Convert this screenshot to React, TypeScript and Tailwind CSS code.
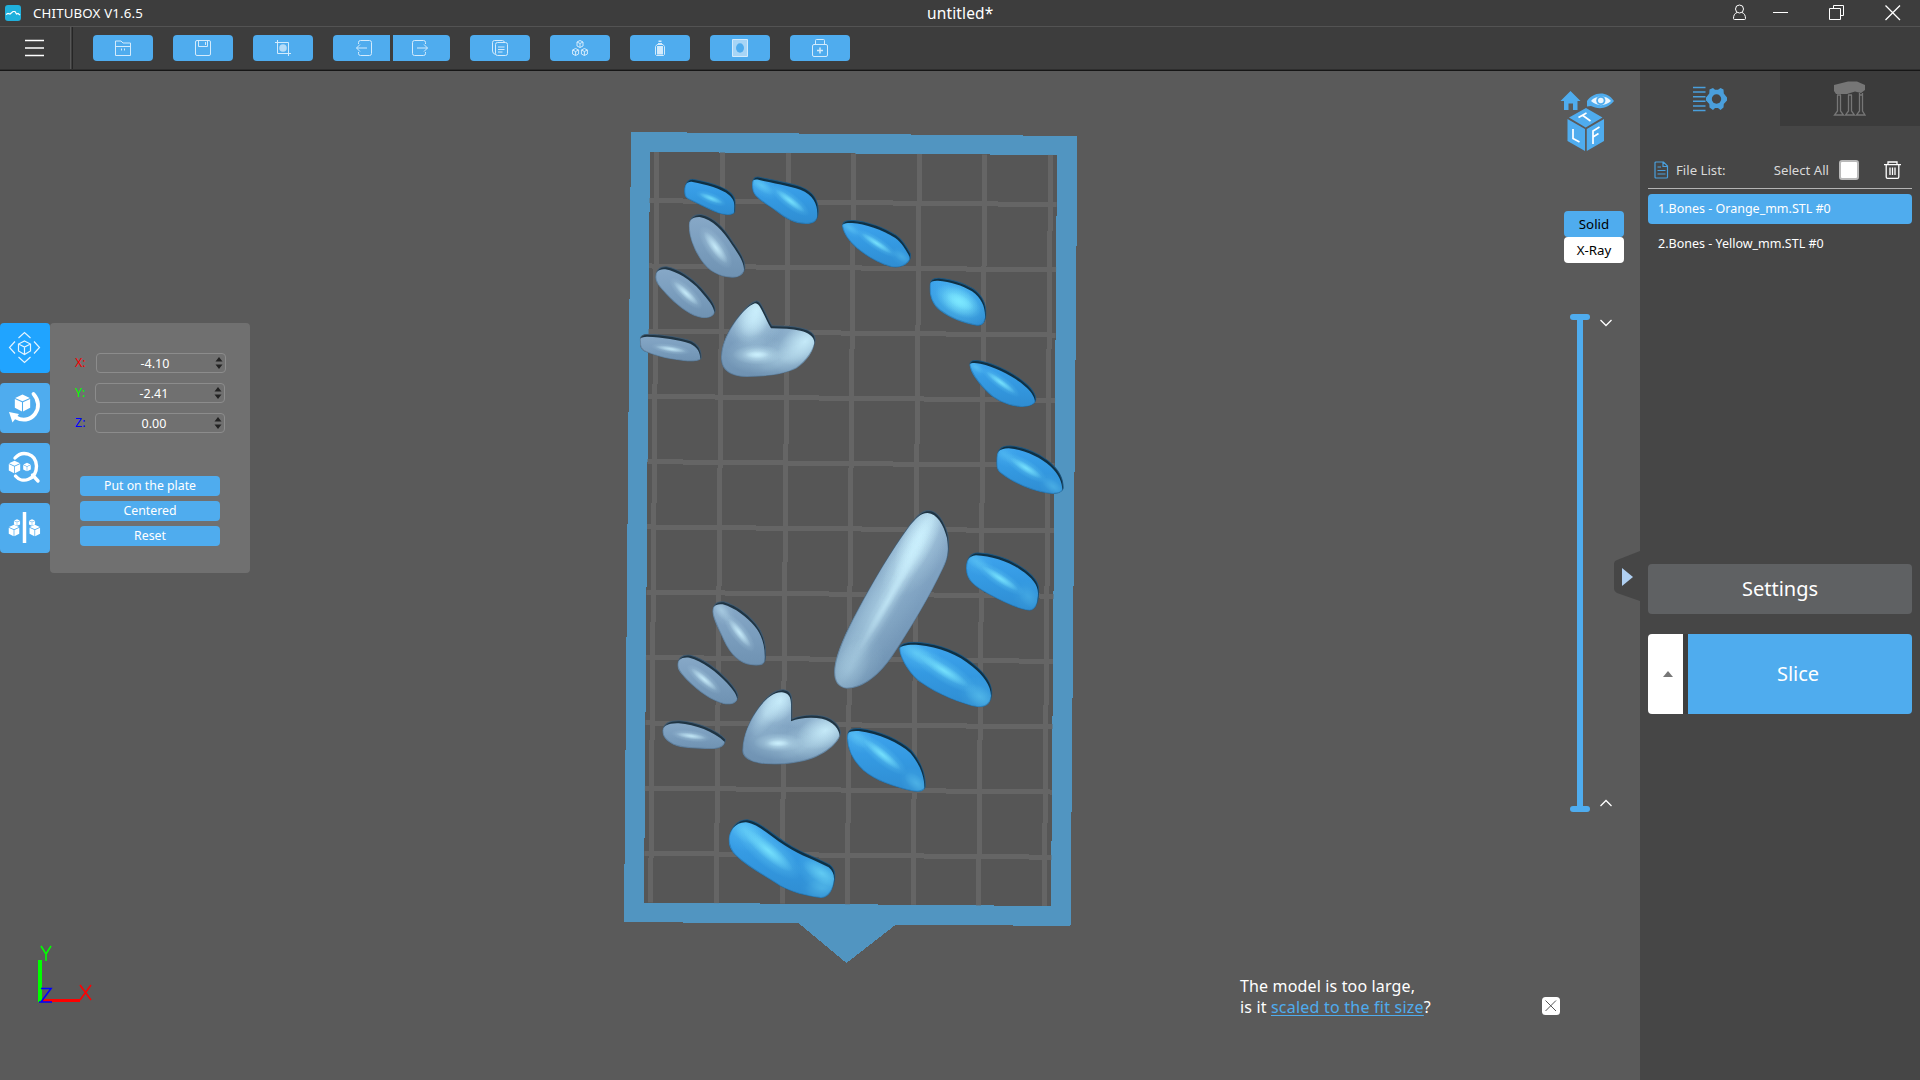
import React, { useId } from "react";
import type { ReactNode } from "react";

type Tone = "blue" | "steel";

interface Highlight {
  x: number;
  y: number;
  rx: number;
  ry: number;
  angle: number;
  strength?: number;
}

interface BoneShape {
  tone: Tone;
  d: string;
  glow: Highlight[];
}

const TONES = {
  blue: { rim: "#0f3044", top: "#3ea4ee", mid: "#3499e1", low: "#2f8dd2", edge: "#2a6fa3", hi: "#7ce8ff" },
  steel: { rim: "#1f3443", top: "#88a9c8", mid: "#7b9ebe", low: "#6f92b2", edge: "#54728d", hi: "#cdf2ff" },
};

const upperBones: BoneShape[] = [
  { tone: "blue", d: "M193 205C197 185 206 174 222 177C262 184 310 198 330 215C343 226 347 235 347 248L346 275C340 287 318 288 295 280C265 268 225 248 203 237C192 231 192 220 193 205Z", glow: [{ x: 273, y: 235, rx: 38, ry: 9, angle: 22, strength: 0.9 }] },
  { tone: "blue", d: "M396 195C397 175 402 166 422 171C460 180 510 187 545 200C585 216 597 245 596 275C595 300 585 312 558 312C525 312 500 298 470 275C445 256 425 247 406 227C398 218 396 208 396 195Z", glow: [{ x: 510, y: 242, rx: 55, ry: 12, angle: 37 }, { x: 425, y: 197, rx: 45, ry: 16, angle: 35, strength: 0.55 }] },
  { tone: "blue", d: "M666 318C666 303 678 299 700 300C740 303 790 320 830 345C848 358 860 378 872 400C876 412 871 422 858 433C845 443 825 444 810 440C775 430 740 410 710 385C688 366 670 342 666 318Z", glow: [{ x: 770, y: 370, rx: 55, ry: 10, angle: 33 }, { x: 690, y: 324, rx: 35, ry: 12, angle: 35, strength: 0.4 }, { x: 845, y: 410, rx: 30, ry: 14, angle: 35, strength: 0.3 }] },
  { tone: "blue", d: "M929 500C929 480 936 472 958 473C995 477 1030 486 1060 505C1090 526 1101 555 1099 585C1098 605 1088 620 1070 617C1030 610 990 595 960 572C938 555 927 530 929 500Z", glow: [{ x: 1015, y: 544, rx: 75, ry: 40, angle: 30 }, { x: 1020, y: 544, rx: 45, ry: 20, angle: 28 }] },
  { tone: "blue", d: "M1048 735C1048 720 1060 717 1085 722C1135 733 1190 762 1225 795C1240 810 1250 825 1249 840C1243 858 1220 863 1195 860C1155 856 1120 837 1095 810C1070 783 1052 760 1048 735Z", glow: [{ x: 1142, y: 787, rx: 54, ry: 10, angle: 36 }, { x: 1068, y: 742, rx: 28, ry: 12, angle: 35, strength: 0.4 }] },
  { tone: "steel", d: "M206 318C206 295 220 281 243 282C280 288 315 325 340 365C358 392 378 418 376 445C372 465 355 475 335 473C300 472 265 455 242 420C222 390 206 350 206 318Z", glow: [{ x: 287, y: 382, rx: 58, ry: 16, angle: 54, strength: 1 }] },
  { tone: "steel", d: "M106 470C107 448 120 437 140 439C175 445 215 470 245 503C268 530 289 553 287 573C282 590 265 597 245 594C215 590 180 565 150 535C125 508 104 490 106 470Z", glow: [{ x: 198, y: 520, rx: 50, ry: 12, angle: 43, strength: 1 }] },
  { tone: "steel", d: "M60 665C58 648 65 642 85 641C130 643 180 650 215 662C238 673 246 690 245 715C238 726 215 726 190 723C150 719 110 710 80 697C62 690 59 680 60 665Z", glow: [{ x: 152, y: 687, rx: 46, ry: 8, angle: 9, strength: 0.95 }] },
  { tone: "steel", d: "M303 710C304 670 325 630 350 595C370 568 392 546 409 541C420 541 424 552 432 567C441 584 448 602 457 616C490 616 520 618 545 623C570 629 588 642 587 660C584 690 560 725 530 745C500 762 440 771 380 771C330 770 301 750 303 710Z", glow: [{ x: 408, y: 572, rx: 85, ry: 50, angle: -70, strength: 1 }, { x: 400, y: 600, rx: 75, ry: 50, angle: -60, strength: 0.7 }, { x: 555, y: 665, rx: 95, ry: 55, angle: -35, strength: 1 }, { x: 500, y: 715, rx: 90, ry: 35, angle: -20, strength: 0.4 }, { x: 412, y: 704, rx: 75, ry: 30, angle: 0, strength: 0.8 }, { x: 412, y: 704, rx: 36, ry: 11, angle: 0 }] },
];

const middleBones: BoneShape[] = [
  { tone: "blue", d: "M1129 185C1129 150 1140 136 1170 136C1215 139 1265 162 1295 190C1322 215 1332 240 1331 265C1326 282 1305 284 1280 280C1235 272 1180 250 1145 222C1130 212 1129 200 1129 185Z", glow: [{ x: 1218, y: 204, rx: 56, ry: 13, angle: 32 }, { x: 1300, y: 260, rx: 40, ry: 18, angle: 35, strength: 0.35 }, { x: 1155, y: 165, rx: 40, ry: 18, angle: 35, strength: 0.3 }] },
  { tone: "blue", d: "M1038 505C1038 478 1050 458 1072 457C1115 459 1165 473 1205 500C1240 523 1258 545 1258 570C1258 600 1250 632 1228 632C1200 630 1150 607 1105 583C1060 558 1038 540 1038 505Z", glow: [{ x: 1140, y: 535, rx: 66, ry: 13, angle: 33 }, { x: 1070, y: 485, rx: 45, ry: 20, angle: 35, strength: 0.4 }, { x: 1225, y: 590, rx: 40, ry: 25, angle: 50, strength: 0.25 }] },
  { tone: "steel", d: "M643 805C648 755 680 690 715 625C760 540 820 440 870 372C890 348 905 330 927 330C955 332 975 365 985 405C992 450 985 475 970 505C930 590 870 690 820 765C780 825 730 866 680 866C650 862 640 840 643 805Z", glow: [{ x: 785, y: 600, rx: 320, ry: 55, angle: -60, strength: 0.55 }, { x: 900, y: 410, rx: 150, ry: 50, angle: -64, strength: 1 }, { x: 875, y: 460, rx: 150, ry: 25, angle: -61, strength: 0.8 }, { x: 805, y: 600, rx: 180, ry: 15, angle: -60, strength: 0.75 }, { x: 690, y: 805, rx: 100, ry: 50, angle: -60, strength: 0.4 }] },
  { tone: "blue", d: "M838 742C842 727 870 724 900 726C960 731 1020 755 1060 790C1095 818 1118 850 1117 880C1115 910 1100 922 1075 922C1025 914 950 882 905 850C870 828 835 770 838 742Z", glow: [{ x: 972, y: 812, rx: 88, ry: 18, angle: 32 }, { x: 890, y: 760, rx: 65, ry: 26, angle: 30, strength: 0.6 }, { x: 1080, y: 890, rx: 55, ry: 30, angle: 35, strength: 0.45 }] },
  { tone: "steel", d: "M277 635C278 612 290 601 312 604C350 615 385 642 408 670C430 697 441 730 438 775C436 795 420 799 395 796C360 792 330 765 310 720C295 685 279 660 277 635Z", glow: [{ x: 358, y: 698, rx: 54, ry: 13, angle: 52, strength: 1 }, { x: 305, y: 632, rx: 40, ry: 18, angle: 52, strength: 0.5 }] },
  { tone: "steel", d: "M172 795C173 770 190 761 212 764C250 774 295 807 325 840C345 862 358 880 355 893C350 912 330 917 310 912C275 903 235 875 200 840C185 823 172 812 172 795Z", glow: [{ x: 252, y: 838, rx: 50, ry: 11, angle: 40, strength: 1 }] },
];

const lowerBones: BoneShape[] = [
  { tone: "steel", d: "M127 152C130 128 150 120 180 121C230 125 285 145 318 177C317 200 300 208 270 207C230 205 190 207 160 194C138 183 127 170 127 152Z", glow: [{ x: 213, y: 168, rx: 46, ry: 9, angle: 8, strength: 0.95 }] },
  { tone: "steel", d: "M367 210C368 165 390 115 420 75C440 48 465 27 490 28C512 30 518 45 517 70L517 115C540 105 575 101 610 107C645 116 664 140 663 162C650 200 600 232 550 244C500 256 430 258 395 244C375 235 366 225 367 210Z", glow: [{ x: 480, y: 62, rx: 75, ry: 50, angle: -55, strength: 1 }, { x: 440, y: 100, rx: 80, ry: 32, angle: -58, strength: 0.6 }, { x: 615, y: 152, rx: 90, ry: 50, angle: -20, strength: 1 }, { x: 560, y: 200, rx: 90, ry: 35, angle: -18, strength: 0.35 }, { x: 475, y: 188, rx: 75, ry: 28, angle: 0, strength: 0.7 }, { x: 475, y: 190, rx: 34, ry: 10, angle: 0 }] },
  { tone: "blue", d: "M681 175C681 150 690 142 720 144C780 151 840 178 875 210C905 245 919 285 917 320C912 336 895 338 870 332C820 320 765 302 730 272C700 245 682 210 681 175Z", glow: [{ x: 786, y: 223, rx: 72, ry: 15, angle: 39 }, { x: 710, y: 172, rx: 45, ry: 22, angle: 40, strength: 0.45 }, { x: 890, y: 310, rx: 45, ry: 22, angle: 40, strength: 0.4 }] },
  { tone: "blue", d: "M326 475C330 445 350 417 382 418C420 423 455 460 500 488C545 518 600 535 630 553C645 565 648 580 645 600C640 630 625 655 602 654C560 650 510 635 480 618C430 585 380 560 345 525C330 508 325 495 326 475Z", glow: [{ x: 445, y: 512, rx: 95, ry: 24, angle: 40 }, { x: 375, y: 450, rx: 60, ry: 34, angle: 35, strength: 0.55 }, { x: 605, y: 580, rx: 65, ry: 28, angle: 32, strength: 0.7 }, { x: 605, y: 625, rx: 50, ry: 30, angle: 0, strength: 0.35 }] },
];

function Bone({ tone, d, glow }: BoneShape) {
  const id = useId().replace(/[^a-zA-Z0-9]/g, "");
  const c = TONES[tone];
  return (
    <g>
      <clipPath id={`clip${id}`}>
        <path d={d} />
      </clipPath>
      <mask id={`body${id}`} maskUnits="userSpaceOnUse" x="0" y="0" width="1410" height="1000">
        <path d={d} fill="#fff" transform="translate(-4 9)" filter="url(#soften)" />
      </mask>
      <linearGradient id={`base${id}`} x1="0" y1="0" x2="0" y2="1">
        <stop offset="0" stopColor={c.top} />
        <stop offset="0.5" stopColor={c.mid} />
        <stop offset="1" stopColor={c.low} />
      </linearGradient>
      <radialGradient id={`hi${id}`}>
        <stop offset="0" stopColor={c.hi} stopOpacity="1" />
        <stop offset="0.4" stopColor={c.hi} stopOpacity="0.6" />
        <stop offset="1" stopColor={c.hi} stopOpacity="0" />
      </radialGradient>
      <g clipPath={`url(#clip${id})`}>
        <path d={d} fill={c.rim} />
        <g mask={`url(#body${id})`}>
          <path d={d} fill={`url(#base${id})`} />
          {glow.map((h, i) => (
            <g key={i} transform={`translate(${h.x} ${h.y}) rotate(${h.angle})`} opacity={h.strength ?? 1}>
              <ellipse rx={h.rx * 1.3} ry={h.ry * 1.9} fill={`url(#hi${id})`} opacity="0.45" />
              <ellipse rx={h.rx} ry={h.ry} fill={`url(#hi${id})`} opacity="0.8" />
            </g>
          ))}
        </g>
        <path d={d} fill="none" stroke={c.edge} strokeWidth="6" opacity="0.6" filter="url(#soften)" />
      </g>
    </g>
  );
}

const columns = [657, 722.7, 788.5, 853.7, 919.5, 985, 1050.7];
const rows = [200.7, 266, 331.2, 396.4, 461.7, 527, 592.3, 657.5, 723, 788.2, 853.4];

function BuildPlate() {
  return (
    <svg className="absolute inset-0 h-full w-full" viewBox="0 71 1640 1009">
      <defs>
        <filter id="soften" x="-20%" y="-20%" width="140%" height="140%">
          <feGaussianBlur stdDeviation="2" />
        </filter>
        <clipPath id="plate">
          <path d="M650 152L1057 155L1051 906L644 902.5Z" />
        </clipPath>
      </defs>
      <g shapeRendering="crispEdges">
        <path d="M631 132L1077.5 136L1070.5 926L896 924.5L846.5 963L799 923.5L624 922Z" fill="#5195c1" />
        <path d="M650 152L1057 155L1051 906L644 902.5Z" fill="#565656" />
        <g clipPath="url(#plate)" stroke="#656565" strokeWidth="5">
          {columns.map((x) => (
            <path key={x} d={`M${x} 150L${x - 6.4} 908`} />
          ))}
          {rows.map((y) => (
            <path key={y} d={`M640 ${y - 0.1}L1060 ${y + 3.9}`} />
          ))}
        </g>
      </g>
      <g transform="translate(620 120) scale(.33333)">
        {upperBones.map((b) => <Bone key={b.d} {...b} />)}
      </g>
      <g transform="translate(620 400) scale(.33333)">
        {middleBones.map((b) => <Bone key={b.d} {...b} />)}
      </g>
      <g transform="translate(620 680) scale(.33333)">
        {lowerBones.map((b) => <Bone key={b.d} {...b} />)}
      </g>
      <g fill="none" shapeRendering="crispEdges">
        <path d="M40 960V1002" stroke="#00ff00" strokeWidth="4" />
        <path d="M42 1000H80" stroke="#ff0000" strokeWidth="3" />
      </g>
      <g fill="none" strokeWidth="1.6">
        <path d="M41 946L46 954V961M51 946L46 954" stroke="#00ff00" />
        <path d="M80 985L91 1000M91 985L80 1000" stroke="#ff0000" />
        <path d="M41 988.500H51L41 1002H52M39 1002H44" stroke="#0000ff" />
      </g>
    </svg>
  );
}

function Glyph({ children, size = 16 }: { children: ReactNode; size?: number }) {
  return (
    <svg width={size} height={size} viewBox={`0 0 ${size} ${size}`} fill="none" stroke="#d3ebfc" strokeWidth="1">
      {children}
    </svg>
  );
}

const toolButton = "flex h-[26px] items-center justify-center bg-[#4facee]";

function Toolbar() {
  return (
    <div className="flex h-[42px] items-center bg-[#3d3d3d]">
      <div className="flex h-full w-[70px] items-center pl-[25px]">
        <svg width="19" height="18" viewBox="0 0 19 18" stroke="#fff" strokeWidth="1.300">
          <path d="M0 1.500H19M0 9H19M0 16.500H19" />
        </svg>
      </div>
      <div className="h-full w-[3px] border-l border-r border-l-[#575757] border-r-[#262626]" />
      <div className="flex gap-5 pl-5">
        <div className={`${toolButton} w-[60px] rounded`}>
          <Glyph><path d="M.5 15.500V1H6L8 3H15.500V15.500ZM.5 6.500H15.500M6.500 8.500V10.500M9.500 8.500V10.500" /></Glyph>
        </div>
        <div className={`${toolButton} w-[60px] rounded`}>
          <Glyph><rect x=".5" y=".5" width="15" height="15" rx="1.5" /><path d="M3.500 .5V6.500H12.500V.5M10.500 2V5" /></Glyph>
        </div>
        <div className={`${toolButton} w-[60px] rounded`}>
          <Glyph><path d="M2.500 0V13.500H16M0 2.500H13.500V16" /><circle cx="8" cy="8" r="3.8" fill="#b5dcf8" stroke="none" /></Glyph>
        </div>
        <div className="flex gap-[3px]">
          <div className={`${toolButton} w-[57px] rounded-l pl-1`}>
            <Glyph><path d="M2.500 4V2.500Q2.500 .5 4.500 .5H13.500Q15.500 .5 15.500 2.500V13.500Q15.500 15.500 13.500 15.500H4.500Q2.500 15.500 2.500 13.500V12M4 4.500L.5 8L4 11.500M.5 8H11" /></Glyph>
          </div>
          <div className={`${toolButton} w-[57px] rounded-r pr-1`}>
            <Glyph><path d="M13.500 4V2.500Q13.500 .5 11.500 .5H2.500Q.5 .5 .5 2.500V13.500Q.5 15.500 2.500 15.500H11.500Q13.500 15.500 13.500 13.500V12M12 4.500L15.500 8L12 11.500M15.500 8H5" /></Glyph>
          </div>
        </div>
        <div className={`${toolButton} w-[60px] rounded`}>
          <Glyph><path d="M3.500 14.500Q.5 13.500 .5 11V2.500Q.5 .5 2.500 .5H10.500Q12 .5 12.500 2.500" /><rect x="3.500" y="2.500" width="12" height="13" rx="2" /><path d="M6 7H12.500M6 9.500H12.500M6 12H10.500" /></Glyph>
        </div>
        <div className={`${toolButton} w-[60px] rounded`}>
          <Glyph>
            {["translate(8 4)", "translate(3.600 12)", "translate(12.400 12)"].map((t) => (
              <path key={t} transform={t} d="M0 -3.500L3 -2V2L0 3.500L-3 2V-2ZM-3 -2L0 -.5L3 -2M0 -.5V3.500" />
            ))}
          </Glyph>
        </div>
        <div className={`${toolButton} w-[60px] rounded`}>
          <Glyph><path d="M3.500 14.500V6.500L5 4.500H11L12.500 6.500V14.500L11.500 15.500H4.500Z" /><path d="M5 6H11V14.500H5ZM6 3H10V5H6ZM6.500 .5H9.500V2H6.500Z" fill="#d3ebfc" stroke="none" /></Glyph>
        </div>
        <div className={`${toolButton} w-[60px] rounded`}>
          <svg width="16" height="18" viewBox="0 0 16 18">
            <path d="M.5 .5H15.500V17.500H.5Z" fill="#a7d5f6" stroke="#d3ebfc" />
            <ellipse cx="8" cy="9" rx="4" ry="4.700" fill="#4facee" />
          </svg>
        </div>
        <div className={`${toolButton} w-[60px] rounded`}>
          <svg width="16" height="18" viewBox="0 0 16 18" fill="none" stroke="#d3ebfc">
            <rect x=".5" y="5.500" width="15" height="12" rx="1.5" />
            <path d="M3.500 5V1.500Q3.500 .5 4.500 .5H11.500Q12.500 .5 12.500 1.500V5" />
            <path d="M8 8.500V14.500M5 11.500H11" strokeWidth="1.500" />
          </svg>
        </div>
      </div>
    </div>
  );
}

function TitleBar() {
  return (
    <div className="relative flex h-[27px] items-center border-b border-b-[#535353] bg-[#3d3d3d]">
      <svg width="16" height="16" viewBox="0 0 16 16" className="ml-[5px]">
        <rect width="16" height="16" rx="3" fill="#20b0dc" />
        <path d="M1 9.500L3 8.500L5 9L8 6.500L10 6.500L11.500 9L13 8.500L15 10" stroke="#fff" strokeWidth="1.200" fill="none" />
      </svg>
      <div className="ml-3 pt-px text-[13.300px] tracking-[0.140px] text-white">CHITUBOX V1.6.5</div>
      <div className="absolute left-[927px] pt-px text-[15.500px] tracking-[0.140px] text-white">untitled*</div>
      <svg className="ml-auto" width="190" height="26" viewBox="1730 0 190 26" fill="none" stroke="#fff" strokeWidth="1">
        <circle cx="1739.500" cy="9" r="4" />
        <path d="M1737 12.500C1734.500 13.500 1733.500 15.500 1733.500 18.500Q1733.500 19.500 1734.500 19.500H1744.500Q1745.500 19.500 1745.500 18.500C1745.500 15.500 1744.500 13.500 1742 12.500" />
        <path d="M1773 12.500H1788M1829.500 8.500H1840.500V19.500H1829.500ZM1833.500 8.500V5.500H1843.500V15.500H1840.500" />
        <path d="M1885.500 5.500L1900 20M1900 5.500L1885.500 20" strokeWidth="1.300" />
      </svg>
    </div>
  );
}

function Cube({ x, y, s }: { x: number; y: number; s: number }) {
  return (
    <g transform={`translate(${x} ${y}) scale(${s})`} fill="#fff" stroke="none">
      <path d="M0 -8L7 -4.800L0 -1.600L-7 -4.800ZM-7.300 -3.800L-.5 -.7V8L-7.300 4.600ZM7.300 -3.800L.5 -.7V8L7.300 4.600Z" />
    </g>
  );
}

function ModelTools() {
  const base = "flex size-[50px] items-center justify-center rounded";
  return (
    <div className="flex flex-col gap-2.5">
      <div className={`${base} bg-[#20a4ff]`}>
        <svg width="50" height="50" viewBox="0 0 50 50" fill="none" stroke="#e4f4ff" strokeWidth="1.200">
          <path d="M18.500 15L24.500 9.500L30.500 15M18.500 34L24.500 39.500L30.500 34M15 18.500L9.500 24.500L15 30.500M34 18.500L39.500 24.500L34 30.500" />
          <path d="M24.500 18L30.500 21V28L24.500 31.500L18.500 28V21ZM18.500 21L24.500 24L30.500 21M24.500 24V31.500" />
        </svg>
      </div>
      <div className={`${base} bg-[#4facee]`}>
        <svg width="50" height="50" viewBox="0 0 50 50" fill="none">
          <Cube x={22.500} y={20} s={1.050} />
          <path d="M33.500 11C39 17 39.500 25 35 31C30 37.500 22 38 16 34.500" stroke="#fff" strokeWidth="3.800" strokeLinecap="round" />
          <path d="M9 29L19 31L12.500 39.500Z" fill="#fff" />
        </svg>
      </div>
      <div className={`${base} bg-[#4facee]`}>
        <svg width="50" height="50" viewBox="0 0 50 50" fill="none">
          <path d="M15 15C22 7 36 10 36.500 23C36.500 37 22 41 15.500 33M32.500 32L38 38" stroke="#fff" strokeWidth="3.400" strokeLinecap="round" />
          <Cube x={14.500} y={24} s={0.780} />
          <Cube x={27} y={24} s={0.520} />
        </svg>
      </div>
      <div className={`${base} bg-[#4facee]`}>
        <svg width="50" height="50" viewBox="0 0 50 50" fill="none">
          <path d="M24.500 9V40" stroke="#fff" strokeWidth="3.500" />
          <Cube x={17} y={19.500} s={0.420} />
          <Cube x={32} y={19.500} s={0.420} />
          <Cube x={14} y={27.500} s={0.720} />
          <Cube x={34.800} y={27.500} s={0.720} />
        </svg>
      </div>
    </div>
  );
}

function Axis({ label, color, value, nudge }: { label: string; color: string; value: string; nudge: string }) {
  return (
    <div className="flex h-5 items-center text-[12.500px]">
      <span className={`w-5 pt-px ${color}`}>{label}</span>
      <div className={`${nudge} flex h-5 w-[130px] items-center justify-end rounded border border-[#8c8c8c] pr-[2px]`}>
        <span className="flex-1 pr-0.5 pt-0.5 text-center text-white">{value}</span>
        <svg width="8" height="12" viewBox="0 0 8 12" fill="#222">
          <path d="M4 0L7.500 4.500H.5ZM4 12L7.500 7.500H.5Z" />
        </svg>
      </div>
    </div>
  );
}

function MovePanel() {
  const action = "flex h-5 w-[140px] items-center justify-center rounded bg-[#4facee] pt-px text-[12.300px] text-white";
  return (
    <div className="h-[250px] w-[200px] rounded bg-[#707070] pt-[30px]">
      <div className="flex flex-col gap-2.5 pl-[25px]">
        <Axis label="X:" color="text-[#f00000]" value="-4.10" nudge="ml-px" />
        <Axis label="Y:" color="text-[#00ff00]" value="-2.41" nudge="ml-0" />
        <Axis label="Z:" color="text-[#0000ff]" value="0.00" nudge="ml-0" />
      </div>
      <div className="mt-[43px] flex flex-col items-center gap-[5px]">
        <div className={action}>Put on the plate</div>
        <div className={action}>Centered</div>
        <div className={action}>Reset</div>
      </div>
    </div>
  );
}

function ViewCube() {
  return (
    <svg width="56" height="64" viewBox="1559 89 56 64" fill="#4facee">
      <path d="M1570.500 91L1580.500 101H1577.500V110H1573V103.500H1568.500V110H1564V101H1560.500Z" />
      <path d="M1587 101C1592 93 1606 89 1614 101C1607 110 1597 109 1591 106L1587 106.500Z" />
      <path d="M1591 101C1595 95.500 1606 94.500 1611 101C1605 106.500 1597 106.500 1591 101Z" fill="#eaf6ff" />
      <circle cx="1600.800" cy="100.500" r="4.600" />
      <circle cx="1600.800" cy="100.500" r="2.800" fill="#eaf6ff" />
      <path d="M1586 108L1602.500 117.500L1585.700 127.500L1569 117.500ZM1567.500 119L1585 129V151L1567.500 141ZM1586.800 129L1604 119V141L1586.800 151Z" />
      <g fill="none" stroke="#fff" strokeWidth="1.700">
        <path d="M1578.500 117.500L1586.500 113M1582.500 115.300L1590.500 121" />
        <path d="M1573 129V138.500L1579.500 142" />
        <path d="M1593 144V131L1599.500 127M1593 137L1598.500 133.500" />
      </g>
    </svg>
  );
}

function LayerSlider() {
  return (
    <div className="flex h-[498px] w-[42px] gap-2.5">
      <div className="flex w-5 flex-col items-center">
        <div className="h-1.5 w-5 rounded-full bg-[#4facee]" />
        <div className="w-1.5 flex-1 bg-[#4facee]" />
        <div className="h-1.5 w-5 rounded-full bg-[#4facee]" />
      </div>
      <div className="flex flex-col justify-between py-[5px]">
        <svg width="12" height="8" viewBox="0 0 12 8" fill="none" stroke="#fff" strokeWidth="1.300"><path d="M.5 1L6 6.500L11.500 1" /></svg>
        <svg width="12" height="8" viewBox="0 0 12 8" fill="none" stroke="#fff" strokeWidth="1.300"><path d="M.5 7L6 1.500L11.500 7" /></svg>
      </div>
    </div>
  );
}

function Viewport() {
  return (
    <div className="relative w-[1640px] bg-[#5a5a5a]">
      <BuildPlate />
      <div className="absolute left-0 top-[252px] flex">
        <ModelTools />
        <MovePanel />
      </div>
      <div className="absolute left-[1559px] top-[18px]"><ViewCube /></div>
      <div className="absolute left-[1564px] top-[140px] w-[60px] text-center text-[13.300px] leading-[26px] text-black">
        <div className="h-[26px] rounded bg-[#4facee]">Solid</div>
        <div className="h-[26px] rounded bg-white">X-Ray</div>
      </div>
      <div className="absolute left-[1570px] top-[243px]"><LayerSlider /></div>
      <svg className="absolute left-[1613px] top-[480px]" width="27" height="50" viewBox="0 0 27 50">
        <path d="M27 0V50L4 42Q1 40.500 1 38V13Q1 10 4 9Z" fill="#464646" />
        <path d="M9 17L20 26L9 35Z" fill="#b0d0f2" />
      </svg>
      <div className="absolute left-[1240px] top-[905px] flex w-[320px] items-end justify-between">
        <div className="text-[16px] leading-[21px] tracking-[0.150px] text-white">
          <div className="whitespace-nowrap">The model is too large,</div>
          <div className="whitespace-nowrap">is it <span className="tracking-[0.230px] text-[#4facee] underline underline-offset-2">scaled to the fit size</span>?</div>
        </div>
        <svg className="mb-[3px]" width="18" height="18" viewBox="0 0 18 18">
          <rect width="18" height="18" rx="3.500" fill="#fff" />
          <path d="M3.500 3.500L14 14M14 3.500L3.500 14" stroke="#555" />
        </svg>
      </div>
    </div>
  );
}

function Sidebar() {
  return (
    <div className="w-[280px] bg-[#464646] text-white">
      <div className="flex h-[55px]">
        <div className="flex w-[140px] items-center justify-center">
          <svg width="36" height="26" viewBox="0 0 36 26" fill="none">
            <path d="M1 1.500H13.500M1 6.100H13.500M1 10.700H13.500M1 15.300H13.500M1 19.900H13.500M1 24.500H13.500" stroke="#4a9fdc" strokeWidth="1.500" />
            <path d="M21 2L23 3.800H26L28.500 2L31.500 3.500L31.800 7.500L35 11.500V14.500L31.800 18L31.500 21.500L28.500 24L26 22H23L21 24L17.500 21.500L17.300 18L14 14.500V11.500L17.300 7.500L17.500 3.500Z" fill="#4a9fdc" />
            <circle cx="24.500" cy="13" r="4.700" fill="#464646" />
          </svg>
        </div>
        <div className="flex w-[140px] items-center justify-center bg-[#3b3b3b]">
          <svg width="34" height="36" viewBox="0 0 34 36" fill="none">
            <path d="M1 4L15 .5H24L32 4V9L28 12L22 10.500L14 13H3L1 10Z" fill="#767676" />
            <path d="M4 14H8M15 14H19M26 14H30M4.500 14V30L1.500 34H10.500L7.500 30V14M15.500 14V30L12.500 34H21.500L18.500 30V14M26.500 12V30L23.500 34H32L29.500 30V12" stroke="#767676" strokeWidth="1.300" />
          </svg>
        </div>
      </div>
      <div className="px-2">
        <div className="mt-[26px] flex h-[37px] items-center border-b border-[#b4b4b4] pl-1.5 text-[13.200px] text-[#d9d9d9]">
          <svg width="15" height="18" viewBox="0 0 15 18" fill="none" stroke="#4a9fdc" strokeWidth="1.200">
            <path d="M2 1H9.500L13.500 5V16Q13.500 17 12.500 17H2Q1 17 1 16V2Q1 1 2 1ZM9 1V5.500H13.500M3.500 6H7M3.500 9.500H11.500M3.500 13H11.500" />
          </svg>
          <span className="ml-[7px] pt-px">File List:</span>
          <span className="ml-auto mr-2.5 pt-px">Select All</span>
          <div className="size-5 rounded-[3px] border-2 border-[#b9b9b9] bg-white" />
          <svg className="ml-[25px] mr-[11px]" width="17" height="18" viewBox="0 0 17 18" fill="none" stroke="#fff" strokeWidth="1.300">
            <path d="M0 3.700H17M4 3.500V1H13V3.500M2.200 4V16Q2.200 17.300 3.500 17.300H13.500Q14.800 17.300 14.800 16V4M6 6.500V14M8.500 6.500V14M11 6.500V14" />
          </svg>
        </div>
        <div className="mt-[5px] flex h-[30px] items-center rounded bg-[#4facee] pl-2.5 text-[12.500px]">1.Bones - Orange_mm.STL #0</div>
        <div className="mt-[5px] flex h-[30px] items-center pl-2.5 text-[12.500px]">2.Bones - Yellow_mm.STL #0</div>
        <div className="mt-[305px] flex h-[50px] items-center justify-center rounded bg-[#5f6163] text-[20px]">Settings</div>
        <div className="mt-5 flex h-20">
          <div className="flex w-[35px] items-center justify-center rounded-l bg-white pl-1">
            <svg width="10" height="6" viewBox="0 0 10 6"><path d="M5 0L10 6H0Z" fill="#777" /></svg>
          </div>
          <div className="w-[5px] bg-[#3e3e3e]" />
          <div className="flex flex-1 items-center justify-center rounded-r bg-[#4facee] pr-1 text-[20px]">Slice</div>
        </div>
      </div>
    </div>
  );
}

export default function App() {
  return (
    <div className="flex h-[1080px] w-[1920px] flex-col overflow-hidden bg-[#3d3d3d] font-['Noto_Sans',sans-serif]">
      <TitleBar />
      <Toolbar />
      <div className="h-0.5 border-b border-b-[#161616] bg-[#2e2e2e]" />
      <div className="flex flex-1">
        <Viewport />
        <Sidebar />
      </div>
    </div>
  );
}
